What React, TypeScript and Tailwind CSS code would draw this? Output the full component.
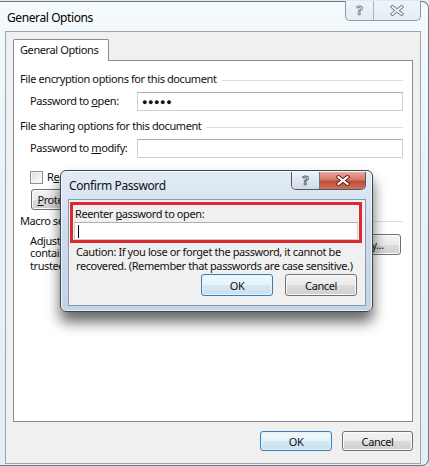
import React from "react";

const btnBase =
  "flex items-center justify-center rounded-[3px] border text-[11px] leading-none";
const btnNormal =
  "border-[#707070] shadow-[inset_0_0_0_1px_#fbfbfb] bg-[linear-gradient(#f2f2f2_0%,#ebebeb_50%,#dddddd_51%,#cfcfcf_100%)]";
const btnDefault =
  "border-[#3c7fb1] shadow-[inset_0_0_0_1px_#e4f3fc] bg-[linear-gradient(#f1f8fd_0%,#e6f2fa_50%,#d6e8f5_51%,#c9e0f1_100%)]";

function Btn({ children, primary, className }: { children: React.ReactNode; primary?: boolean; className?: string }) {
  return <div className={`${btnBase} ${primary ? btnDefault : btnNormal} ${className ?? ""}`}>{children}</div>;
}

function CloseGlyph({ active }: { active?: boolean }) {
  return (
    <svg width="14" height="11" viewBox="0 0 14 11">
      <path d="M2.5 2 L11.5 9 M11.5 2 L2.5 9" stroke={active ? "#5a1812" : "#6f7b88"} strokeWidth={active ? 4 : 3.6} strokeLinecap="square" fill="none" />
      <path d="M2.5 2 L11.5 9 M11.5 2 L2.5 9" stroke={active ? "#ffffff" : "#f4f7fa"} strokeWidth={active ? 2.2 : 1.8} strokeLinecap="square" fill="none" />
    </svg>
  );
}

function Section({ title }: { title: string }) {
  return (
    <div className="flex items-center gap-[5px] h-[15px]">
      <span className="whitespace-nowrap">{title}</span>
      <div className="flex-1 h-px bg-[#dcdfe3] mt-[1px]" />
    </div>
  );
}

function TextBox({ children }: { children?: React.ReactNode }) {
  return (
    <div className="flex-1 h-[19px] border border-[#ccd0d6] border-t-[#abadb3] bg-white flex items-center pl-[4px]">
      {children}
    </div>
  );
}

export default function App() {
  return (
    <div className="w-[429px] h-[466px] overflow-hidden relative bg-[#dfeaf0] font-['Noto_Sans',sans-serif] text-[11px] tracking-[-0.4px] text-[#111]">
      <div className="h-[465px] mt-[1px] border-t border-r border-b border-[#6d7a86] rounded-tr-[7px] rounded-br-[7px] bg-[linear-gradient(180deg,#f5fafc_0%,#e8f3f7_40%,#e2eef4_100%)] flex flex-col pl-[5px] pr-[7px]">
        {/* title bar */}
        <div className="h-[29px] flex items-start shrink-0">
          <span className="mt-[7px] ml-[2px] text-[12px] tracking-[-0.4px] text-[#000]">General Options</span>
          <div className="ml-auto flex h-[20px] -mt-[1px] border border-t-0 border-[#8d9aa8] rounded-b-[5px] overflow-hidden bg-[linear-gradient(#eef5f9,#e3edf3)]">
            <div className="w-[28px] flex items-center justify-center border-r border-[#a8b4c0] text-[13px] font-bold text-[#f6f9fb] [-webkit-text-stroke:0.8px_#6f7b88]">?</div>
            <div className="w-[46px] flex items-center justify-center">
              <CloseGlyph />
            </div>
          </div>
        </div>

        {/* client area */}
        <div className="flex-1 mb-[1px] bg-[#f0f0f0] border border-[#9aa6b2] flex flex-col px-[7px] pt-[7px]">
          <div className="flex">
            <div className="relative z-10 w-[96px] h-[22px] -mb-px bg-white border border-b-0 border-[#898c95] rounded-t-[2px] flex items-center pl-[6px]">
              General Options
            </div>
          </div>
          <div className="h-[362px] bg-white border border-[#898c95] pl-[6px] pr-[9px] pt-[11px] flex flex-col">
            <Section title="File encryption options for this document" />
            <div className="flex items-center pl-[10px] mt-[5px]">
              <span className="w-[107px]">
                Password to <u>o</u>pen:
              </span>
              <TextBox>
                <span className="text-[9px] tracking-[0.6px] leading-none">●●●●●</span>
              </TextBox>
            </div>
            <div className="mt-[8px]">
              <Section title="File sharing options for this document" />
            </div>
            <div className="flex items-center pl-[10px] mt-[5px]">
              <span className="w-[107px]">
                Password to <u>m</u>odify:
              </span>
              <TextBox />
            </div>
            <div className="flex items-center pl-[10px] mt-[11px] gap-[4px]">
              <div className="w-[13px] h-[13px] border border-[#8e8f8f] bg-[linear-gradient(135deg,#dcdcdc,#fefefe)] shadow-[inset_0_0_0_1px_#f4f4f4]" />
              <span>
                R<u>e</u>ad-only recommended
              </span>
            </div>
            <div className="pl-[11px] mt-[3px]">
              <Btn className="w-[108px] h-[21px]">
                <u>P</u>rotect Document...
              </Btn>
            </div>
            <div className="mt-[4px]">
              <Section title="Macro security" />
            </div>
            <div className="flex items-start pl-[10px] mt-[5px] pr-[2px]">
              <div className="flex-1 leading-[12.5px] pt-px">
                <div>Adjust the security level for opening files that might</div>
                <div>contain macro viruses, and specify the names of</div>
                <div>trusted macro developers.</div>
              </div>
              <Btn className="w-[110px] h-[21px]">
                Macro <u>S</u>ecurity...
              </Btn>
            </div>
          </div>
          <div className="flex justify-end gap-[10px] mt-[9px]">
            <Btn primary className="w-[72px] h-[20px]">
              OK
            </Btn>
            <Btn className="w-[71px] h-[20px]">Cancel</Btn>
          </div>
        </div>
      </div>

      {/* Confirm Password dialog */}
      <div className="absolute left-[60px] top-[170px] w-[313px] h-[142px] rounded-[6px] border border-[#3e4650] bg-[linear-gradient(180deg,#e2ecf6_0%,#cddbea_45%,#c3d4e5_100%)] shadow-[0_10px_14px_rgba(0,0,0,0.6),inset_0_0_0_1px_rgba(255,255,255,0.65)] flex flex-col pl-[7px] pr-[6px] pb-[5px]">
        <div className="h-[28px] flex items-start shrink-0">
          <span className="mt-[6px] ml-[1px] text-[12px] tracking-[-0.4px]">Confirm Password</span>
          <div className="ml-auto flex h-[18px] mt-[1px] border border-t-0 border-[#4d5a68] rounded-b-[5px] overflow-hidden">
            <div className="w-[28px] flex items-center justify-center border-r border-[#6b7785] bg-[linear-gradient(#edf3f8,#cfdbe7)] text-[13px] font-bold text-[#f6f9fb] [-webkit-text-stroke:0.8px_#4b5562]">?</div>
            <div className="w-[45px] flex items-center justify-center bg-[linear-gradient(#e9a89e_0%,#d7796c_45%,#c24a38_55%,#d0705a_100%)]">
              <CloseGlyph active />
            </div>
          </div>
        </div>
        <div className="flex-1 bg-[#f0f0f0] border border-[#8a9bae] flex flex-col px-[1px] pt-[2px]">
          <div className="w-[292px] border-[3px] border-[#dc2a32] flex flex-col pl-[1px] pr-[1px]">
            <span className="pl-[1px] mt-[1px] h-[15px] leading-[15px]">
              Reenter <u>p</u>assword to open:
            </span>
            <div className="h-[18px] mt-[1px] border border-[#ccd0d6] border-t-[#abadb3] bg-white flex items-center pl-[3px]">
              <div className="w-px h-[13px] bg-black" />
            </div>
          </div>
          <div className="pl-[6px] mt-[2px] leading-[14px]">
            <div>Caution: If you lose or forget the password, it cannot be</div>
            <div>recovered. (Remember that passwords are case sensitive.)</div>
          </div>
          <div className="flex justify-end gap-[12px] pr-[7px] mt-[1px]">
            <Btn primary className="w-[72px] h-[22px]">
              OK
            </Btn>
            <Btn className="w-[72px] h-[22px]">Cancel</Btn>
          </div>
        </div>
      </div>
    </div>
  );
}
